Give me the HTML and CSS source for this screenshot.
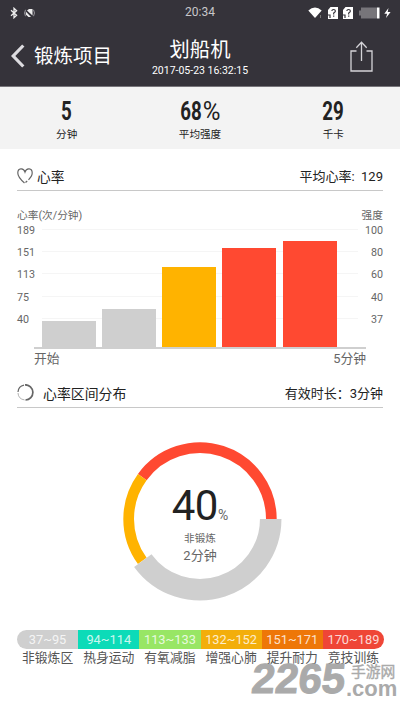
FILE: index.html
```html
<!DOCTYPE html>
<html lang="zh-CN">
<head>
<meta charset="utf-8">
<title>划船机</title>
<link rel="stylesheet" href="styles.css">
</head>
<body>
<header class="header">
  <div class="status">
    <div class="status-left">
      <svg width="8" height="12" viewBox="0 0 8 12" fill="none" stroke="#eee" stroke-width="1.3"><path d="M1 3.2l5.600 5L4 10.700V1.300l2.600 2.500L1 8.800"/></svg>
      <svg width="13" height="10" viewBox="0 0 13 10"><path d="M2.500 1.800Q.5 5 2.500 8.200M10.500 1.800q2 3.200 0 6.400" fill="none" stroke="#99979d"/><path d="M4 2.500L6 1h3.500v6.500zM2.800 3.500L8 9H5.500L2.800 6.500z" fill="#eee"/></svg>
    </div>
    <div class="clock">20:34</div>
    <div class="status-right">
      <svg class="wifi" width="15" height="12" viewBox="0 0 15 12"><path d="M.3 3.400Q7 -2.200 13.700 3.400L7 11z" fill="#fff"/><path d="M12.500 8v3" stroke="#777"/></svg>
      <svg class="sim" width="10" height="12" viewBox="0 0 10 12"><path d="M2.500 0H10v12H0V3z" fill="#fff"/><path d="M3.800 4Q4 2.500 5.600 2.500T7.400 4Q7.400 5 5.700 6v1.600M5.700 8.500v1.300M0 8h2v3" fill="none" stroke="#35333a" stroke-width="1.200"/></svg>
      <svg class="sim" width="10" height="12" viewBox="0 0 10 12"><path d="M2.500 0H10v12H0V3z" fill="#fff"/><path d="M3.800 4Q4 2.500 5.600 2.500T7.400 4Q7.400 5 5.700 6v1.600M5.700 8.500v1.300M0 8h2v3" fill="none" stroke="#35333a" stroke-width="1.200"/></svg>
      <svg class="battery" width="21" height="12" viewBox="0 0 21 12"><path d="M0 3.500h2V.5h16v11H2v-3H0z" fill="#77757a"/><path d="M18 .5h2.500v11H18z" fill="#fff"/></svg>
      <svg width="7" height="12" viewBox="0 0 7 12"><path d="M4.500 1L.3 6.700h2.800L2 11l4.600-6H3.700z" fill="#fff"/></svg>
    </div>
  </div>
  <div class="nav">
    <div class="back">
      <svg width="14" height="24" viewBox="0 0 14 24"><path d="M12.300 1.500L2.200 12l10.100 10.500" fill="none" stroke="#dddce0" stroke-width="3.200"/></svg>
      <span>锻炼项目</span>
    </div>
    <div class="heading">
      <div class="title">划船机</div>
      <div class="date">2017-05-23 16:32:15</div>
    </div>
    <div class="share">
      <svg width="23" height="31" viewBox="0 0 23 31" fill="none" stroke="#d5d4d8" stroke-width="1.300"><path d="M6.500 10H1v20h21V10h-5.500M11.500 20V1.500M6.300 6.700l5.200-5.400 5.200 5.400"/></svg>
    </div>
  </div>
</header>

<section class="stats">
  <div class="stat"><div class="num"><b>5</b></div><div class="unit">分钟</div></div>
  <div class="stat"><div class="num"><b>68</b><i>%</i></div><div class="unit">平均强度</div></div>
  <div class="stat"><div class="num"><b>29</b></div><div class="unit">千卡</div></div>
</section>

<main class="main">
  <div class="section-head first">
    <svg class="heart" width="16" height="16" viewBox="0 0 16 16" fill="none" stroke="#666" stroke-width="1.200"><path d="M7.500 15Q.8 9.200.8 5C.8 0 6.500-.5 8 4 9.500-.5 15.200 0 15.200 5Q15.200 8 11.500 11.800M8.500 14.500l1.700-1.500"/></svg>
    <span class="name">心率</span>
    <span class="value">平均心率:&nbsp; 129</span>
  </div>
  <div class="axis-names"><span>心率(次/分钟)</span><span>强度</span></div>
  <div class="chart">
    <div class="ticks"><span>189</span><span>151</span><span>113</span><span>75</span><span>40</span></div>
    <div class="plot">
      <div class="bar" style="height:26px"></div>
      <div class="bar" style="height:38px"></div>
      <div class="bar amber" style="height:80px"></div>
      <div class="bar red" style="height:99px"></div>
      <div class="bar red" style="height:106px"></div>
    </div>
    <div class="ticks right"><span>100</span><span>80</span><span>60</span><span>40</span><span>37</span></div>
  </div>
  <div class="range"><span>开始</span><span>5分钟</span></div>

  <div class="section-head second">
    <svg width="17" height="17" viewBox="0 0 17 17" fill="none" stroke="#666"><path d="M8 .8A7.500 7.500 0 0 1 8.500 16" stroke-width="1.700"/><path d="M7 1.100A7.500 7.500 0 0 0 1 8" stroke-width="1.200"/><path d="M1 9a7.500 7.500 0 0 0 6.500 6.900" stroke="#aaa" stroke-width=".9"/></svg>
    <span class="name">心率区间分布</span>
    <span class="value">有效时长：3分钟</span>
  </div>

  <div class="donut">
    <svg width="164" height="164" viewBox="-82 -82 164 164" fill="none">
      <path d="M-57.720 -41.940A71.350 71.350 0 0 1 71.350 0" stroke="#ff4931" stroke-width="10.700"/>
      <path d="M-57.720 41.940A71.350 71.350 0 0 1 -57.720 -41.940" stroke="#ffb300" stroke-width="10.700"/>
      <path d="M70.700 0A70.700 70.700 0 0 1 -57.200 41.560" stroke="#cfcfcf" stroke-width="21.500"/>
    </svg>
    <div class="donut-text">
      <div class="pct"><span>40</span><small>%</small></div>
      <div class="zone">非锻炼</div>
      <div class="mins">2分钟</div>
    </div>
  </div>

  <div class="legend">
    <div class="z1">37~95</div><div class="z2">94~114</div><div class="z3">113~133</div><div class="z4">132~152</div><div class="z5">151~171</div><div class="z6">170~189</div>
  </div>
  <div class="legend-names">
    <span>非锻炼区</span><span>热身运动</span><span>有氧减脂</span><span>增强心肺</span><span>提升耐力</span><span>竞技训练</span>
  </div>
</main>
<div class="mark">
  <div class="mark-num">2265</div>
  <div class="mark-side"><div class="mark-cn">手游网</div><div class="mark-com">.com</div></div>
</div>
</body>
</html>
```
FILE: styles.css
```css
* { box-sizing: border-box; }
body {
  margin: 0;
  width: 400px;
  height: 711px;
  overflow: hidden;
  position: relative;
  background: #fff;
  color: #222;
  font-family: Roboto, "Noto Sans CJK SC", sans-serif;
}
svg { display: block; flex: none; }

.header { height: 87px; background: #35333a; border-bottom: 1px solid #77757a; color: #fff; }
.status { height: 24px; display: grid; grid-template-columns: 1fr 60px 1fr; align-items: center; }
.status-left { display: flex; gap: 5px; align-items: center; padding-left: 10px; }
.clock { text-align: center; font-size: 12px; line-height: 25px; color: #c8c7ca; }
.status-right { display: flex; justify-content: flex-end; align-items: center; padding-right: 9px; }
.wifi { margin-right: 5px; }
.sim { margin-right: 4.500px; }
.battery { margin: 0 4px 0 2px; }

.nav { height: 62px; display: grid; grid-template-columns: 130px 140px 130px; }
.back { display: flex; align-items: center; gap: 9px; padding-left: 11px; font-size: 19.500px; line-height: 62px; white-space: nowrap; }
.back span { padding-top: 2px; }
.heading { text-align: center; padding-top: 13px; }
.title { font-size: 20.300px; line-height: 26px; }
.date { font-size: 10.500px; line-height: 15px; }
.share { display: flex; justify-content: flex-end; align-items: center; padding-right: 27px; }

.stats { height: 62px; background: #f3f3f3; padding-top: 11px; display: grid; grid-template-columns: repeat(3, 1fr); text-align: center; }
.num { height: 26px; line-height: 27px; display: flex; justify-content: center; font-size: 26px; }
.num b { display: block; transform: scaleX(.72); margin: 0 -4px; }
.num i { font-style: normal; font-weight: 400; display: block; transform: scaleX(.93); margin-right: -1px; }
.unit { font-size: 10.600px; line-height: 21px; }

.main { padding: 0 17px; }
.section-head { display: flex; align-items: center; border-bottom: 1px solid #c8c8c8; white-space: nowrap; }
.section-head .value { margin-left: auto; font-size: 13px; }
.first { height: 42px; padding-top: 12px; }
.first .name { margin-left: 4px; font-size: 13.700px; }
.second { height: 40px; padding-top: 10px; }
.second .name { margin-left: 9px; font-size: 13.900px; }

.axis-names { display: flex; justify-content: space-between; font-size: 10.700px; line-height: 18px; color: #666; padding-top: 16px; height: 35px; }
.chart { display: grid; grid-template-columns: 17px 332px 17px; height: 130px; margin-top: -7px; }
.ticks { display: flex; flex-direction: column; color: #666; font-size: 10.700px; line-height: 22.200px; padding-top: 1px; }
.ticks.right { align-items: flex-end; }
.plot {
  margin-top: 10px;
  height: 120px;
  border-bottom: 2px solid #cfcfcf;
  padding: 0 29.500px 0 8px;
  display: flex;
  align-items: flex-end;
  gap: 6.200px;
  background: repeating-linear-gradient(#f5f5f5 0 1px, transparent 1px 22.200px) 8px 0 / 316px 90px no-repeat;
}
.bar { flex: 1; background: #cfcfcf; }
.amber { background: #ffb300; }
.red { background: #ff4931; }
.range { display: flex; justify-content: space-between; padding: 0 17px; height: 19px; font-size: 12.800px; line-height: 20px; color: #666; }

.donut { margin-top: 29px; height: 164px; display: grid; justify-content: center; }
.donut > * { grid-area: 1 / 1; }
.donut-text { text-align: center; padding-top: 45px; color: #666; }
.pct { height: 48px; line-height: 47px; display: flex; justify-content: center; align-items: baseline; }
.pct span { font-size: 42px; color: #222; letter-spacing: -.5px; }
.pct small { font-size: 14px; }
.zone { font-size: 10.600px; line-height: 17px; }
.mins { font-size: 13px; line-height: 17px; }

.legend { margin-top: 29px; height: 19px; width: 367px; display: grid; grid-template-columns: repeat(6, 1fr); border-radius: 10px; overflow: hidden; color: #fffc; font-size: 12.800px; line-height: 20px; text-align: center; }
.z1 { background: #cfcfcf; }
.z2 { background: #0cdbb8; }
.z3 { background: #98e665; }
.z4 { background: #f3ae0b; }
.z5 { background: #ee7708; }
.z6 { background: #ef4637; }
.legend-names { display: grid; width: 367px; grid-template-columns: repeat(6, 1fr); text-align: center; font-size: 12.800px; line-height: 18px; color: #555; white-space: nowrap; }

.mark { position: absolute; left: 252px; top: 660px; display: flex; color: #aaa; }
.mark-num { width: 94px; font: bold 42px/38px "Liberation Sans", sans-serif; transform: skewX(-6deg); -webkit-text-stroke: 1px #aaa; }
.mark-side { padding-top: 4px; }
.mark-cn { font-size: 14.800px; line-height: 16px; padding-left: 5px; white-space: nowrap; -webkit-text-stroke: .4px #aaa; }
.mark-com { font: bold 22px/17px "Liberation Sans", sans-serif; }
```
